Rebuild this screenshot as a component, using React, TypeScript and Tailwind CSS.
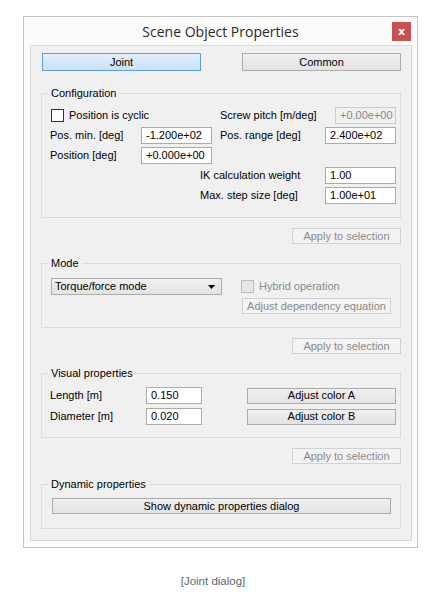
import React from "react";

const F = "font-['Liberation_Sans',Arial,sans-serif]";

function Field({ value, w, disabled }: { value: string; w: string; disabled?: boolean }) {
  return (
    <div
      className={`${w} h-[17px] border flex items-center pl-[4px] text-[11px] leading-none ${
        disabled ? "border-[#cccccc] bg-[#f0f0f0] text-[#8a8a8a]" : "border-[#ababab] bg-white text-black"
      }`}
    >
      {value}
    </div>
  );
}

function Btn({ label, w, disabled, h = "h-[16px]" }: { label: string; w: string; disabled?: boolean; h?: string }) {
  return (
    <div
      className={`${w} ${h} border flex items-center justify-center text-[11px] leading-none ${
        disabled
          ? "border-[#d2d2d2] bg-[#f3f3f3] text-[#8a8a8a]"
          : "border-[#acacac] bg-gradient-to-b from-[#f0f0f0] to-[#e3e3e3] text-black"
      }`}
    >
      {label}
    </div>
  );
}

function Check({ disabled }: { disabled?: boolean }) {
  return (
    <div
      className={`w-[13px] h-[13px] border ${
        disabled ? "border-[#bcbcbc] bg-[#e6e6e6]" : "border-[#333333] bg-white"
      }`}
    />
  );
}

function Group({ title, className, children }: { title: string; className?: string; children: React.ReactNode }) {
  return (
    <fieldset className={`border border-[#dcdcdc] px-0 ${className ?? ""}`}>
      <legend className="ml-[6px] px-[3px] text-[11px] leading-[15px] text-black">{title}</legend>
      {children}
    </fieldset>
  );
}

function Apply({ className }: { className?: string }) {
  return (
    <div className={`flex justify-end ${className ?? ""}`}>
      <Btn label="Apply to selection" w="w-[109px]" disabled />
    </div>
  );
}

export default function App() {
  return (
    <div className={`w-[442px] min-h-[595px] bg-white pt-[16px] ${F}`}>
      <div className="ml-[23px] w-[395px] h-[532px] border border-[#c6c6c6] bg-[#fbfbfb] flex flex-col">
        <div className="h-[28px] shrink-0 grid grid-cols-[1fr_auto_1fr] items-center">
          <div />
          <div className="font-['Open_Sans',sans-serif] text-[14px] text-[#2b2b2b] leading-none pt-[1px]">
            Scene Object Properties
          </div>
          <div className="flex justify-end pr-[6px]">
            <div className="w-[19px] h-[19px] bg-[#c75050] flex items-center justify-center text-white text-[11px] font-bold leading-none font-['DejaVu_Sans',sans-serif]">
              x
            </div>
          </div>
        </div>
        <div className="ml-[6px] mr-[5px] mb-[6px] flex-1 border border-[#d9d9d9] bg-[#f0f0f0] px-[10px] flex flex-col">
          {/* tabs */}
          <div className="mt-[7px] flex justify-between pl-[1px]">
            <div className="w-[159px] h-[18px] border border-[#5d9fd9] bg-gradient-to-b from-[#e0effa] to-[#c9e2f7] flex items-center justify-center text-[11px] leading-none">
              Joint
            </div>
            <div className="w-[159px] h-[18px] border border-[#acacac] bg-gradient-to-b from-[#f0f0f0] to-[#e3e3e3] flex items-center justify-center text-[11px] leading-none">
              Common
            </div>
          </div>

          {/* Configuration */}
          <Group title="Configuration" className="mt-[15px]">
            <div className="pt-[6px] pb-[13px] pl-[8px] pr-[4px] flex flex-col gap-[3px] text-[11px] leading-none">
              <div className="h-[17px] flex items-center">
                <div className="w-[170px] flex items-center gap-[5px] pl-[1px]">
                  <Check />
                  <span>Position is cyclic</span>
                </div>
                <span className="flex-1">Screw pitch [m/deg]</span>
                <Field value="+0.00e+00" w="w-[61px]" disabled />
              </div>
              <div className="h-[17px] flex items-center">
                <span className="w-[91px]">Pos. min. [deg]</span>
                <Field value="-1.200e+02" w="w-[71px]" />
                <span className="ml-[8px] flex-1">Pos. range [deg]</span>
                <Field value="2.400e+02" w="w-[71px]" />
              </div>
              <div className="h-[17px] flex items-center">
                <span className="w-[91px]">Position [deg]</span>
                <Field value="+0.000e+00" w="w-[71px]" />
              </div>
              <div className="h-[17px] flex items-center">
                <span className="ml-[150px] flex-1">IK calculation weight</span>
                <Field value="1.00" w="w-[71px]" />
              </div>
              <div className="h-[17px] flex items-center">
                <span className="ml-[150px] flex-1">Max. step size [deg]</span>
                <Field value="1.00e+01" w="w-[71px]" />
              </div>
            </div>
          </Group>

          <Apply className="mt-[10px]" />

          {/* Mode */}
          <Group title="Mode" className="mt-[12px]">
            <div className="pt-[7px] pb-[13px] pl-[9px] flex text-[11px] leading-none">
              <div className="w-[171px] h-[17px] border border-[#acacac] bg-gradient-to-b from-[#f0f0f0] to-[#e3e3e3] flex items-center justify-between pl-[3px] pr-[6px]">
                <span>Torque/force mode</span>
                <svg width="7" height="4" viewBox="0 0 7 4">
                  <path d="M0 0h7L3.5 4z" fill="#000" />
                </svg>
              </div>
              <div className="ml-[19px] flex flex-col gap-[3px]">
                <div className="h-[17px] flex items-center gap-[5px]">
                  <Check disabled />
                  <span className="text-[#8a8a8a]">Hybrid operation</span>
                </div>
                <div className="pl-[1px]">
                  <Btn label="Adjust dependency equation" w="w-[149px]" disabled />
                </div>
              </div>
            </div>
          </Group>

          <Apply className="mt-[10px]" />

          {/* Visual properties */}
          <Group title="Visual properties" className="mt-[12px]">
            <div className="pt-[6px] pb-[12px] pl-[8px] flex flex-col gap-[4px] text-[11px] leading-none">
              <div className="h-[17px] flex items-center">
                <span className="w-[96px]">Length [m]</span>
                <Field value="0.150" w="w-[56px]" />
                <div className="ml-[45px]">
                  <Btn label="Adjust color A" w="w-[149px]" />
                </div>
              </div>
              <div className="h-[17px] flex items-center">
                <span className="w-[96px]">Diameter [m]</span>
                <Field value="0.020" w="w-[56px]" />
                <div className="ml-[45px]">
                  <Btn label="Adjust color B" w="w-[149px]" />
                </div>
              </div>
            </div>
          </Group>

          <Apply className="mt-[10px]" />

          {/* Dynamic properties */}
          <Group title="Dynamic properties" className="mt-[13px]">
            <div className="pt-[6px] pb-[14px] pl-[10px]">
              <Btn label="Show dynamic properties dialog" w="w-[339px]" />
            </div>
          </Group>
        </div>
      </div>
      <div className="mt-[25px] pr-[16px] text-center text-[11.5px] text-[#5f6670] font-['Liberation_Sans',Arial,sans-serif]">
        [Joint dialog]
      </div>
    </div>
  );
}
